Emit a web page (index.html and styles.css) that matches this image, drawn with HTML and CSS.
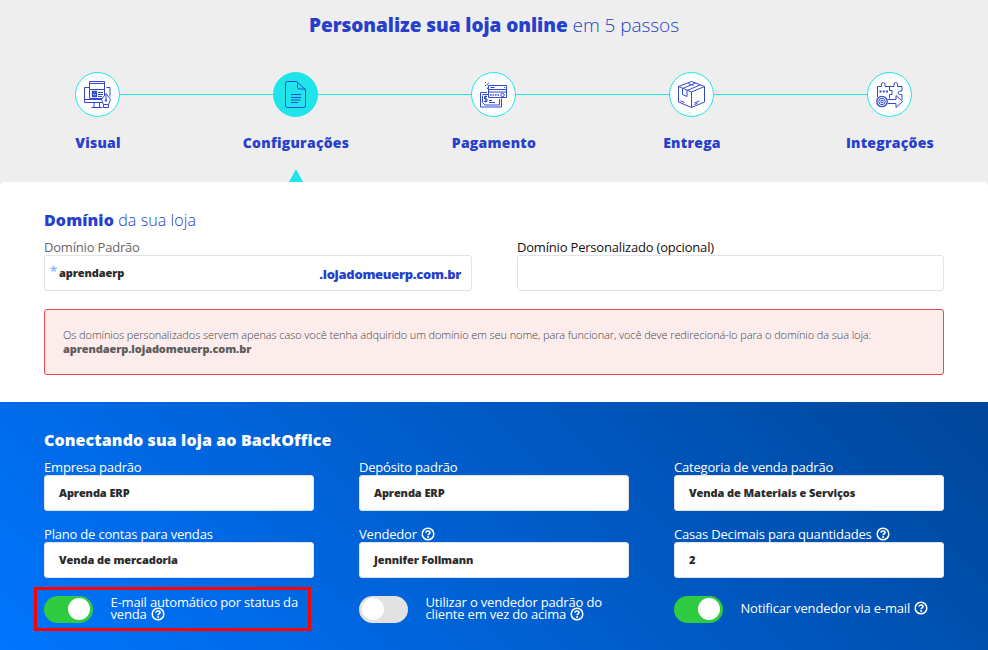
FILE: index.html
```html
<!DOCTYPE html>
<html lang="pt-BR">
<head>
<meta charset="utf-8">
<title>Personalize sua loja online</title>
<link rel="stylesheet" href="styles.css">
</head>
<body>
<svg class="defs" width="0" height="0">
  <symbol id="help" viewBox="0 0 14 14">
    <circle cx="7" cy="7" r="5.800" fill="none" stroke="currentColor" stroke-width="1.500"/>
    <path d="M4.900 5.700C5.100 4.500 5.900 4 7 4c1.200 0 2 .7 2 1.600C9 6.900 7.100 6.900 7.100 8.300" fill="none" stroke="currentColor" stroke-width="1.700"/>
    <circle cx="7.100" cy="10" r="1" fill="currentColor"/>
  </symbol>
</svg>
<header class="top">
  <h1 class="title"><b>Personalize sua loja online</b> <span>em 5 passos</span></h1>
  <ol class="steps">
    <li class="step">
      <span class="circle">
        <svg class="icon" viewBox="0 0 27 27">
          <path d="M5 6.500H.5v15h18M22.500 6.500H26v9M.5 18.500h17M10 21.500v4.500M15.500 21.500v4.500M7.500 26.500h11M5.500 .5h15v17h-15zM5.500 2.500h15M5.500 8.500h15M14 11.500h5M14 13.500h5M14 15.500h4"/>
          <path d="M8.500 10.500h4v5h-4zM8.500 10.500l4 5M12.500 10.500l-4 5" stroke-width="1.300"/>
          <path d="M22 12.500l4.500 6-2 5h-5l-2-5zM22 14v5M19.500 23.500h5v3h-5z" fill="#fff"/>
          <circle cx="22" cy="19.500" r=".9"/>
        </svg>
      </span>
      <span class="name">Visual</span>
    </li>
    <li class="step active">
      <span class="circle">
        <svg class="icon" viewBox="0 0 27 27">
          <path d="M14.500 .5H5.500a2 2 0 0 0-2 2v22a2 2 0 0 0 2 2h16a2 2 0 0 0 2-2V8.500zM15.500 .5V6a2 2 0 0 0 2 2h6"/>
          <path d="M9 13.500h10M9 16.500h10M9 19h9.500M9 21.500h7"/>
        </svg>
      </span>
      <span class="name">Configurações</span>
    </li>
    <li class="step">
      <span class="circle">
        <svg class="icon" viewBox="0 0 27 27">
          <path d="M8.500 4.500h18v12h-18zM8.500 8.500h18M8.500 11h18M10.500 6.500h4M24 6.500h1"/>
          <path d="M10 14h9" stroke-width="1.500" stroke-dasharray="1.500 1"/>
          <circle cx="22.500" cy="14" r="1.700"/>
          <path d="M7 11.500H.5v14.500h21v-8.500M2.500 14.500v7l2.500 2.500h14.500v-6M2.500 13.500H8M9 21.500h6M9 19.500h3M7 15.500H4.500v2.500h2.500v2.500h-3M5.700 14.500v7M6.500 4.500l2.500-3M5 1.500h1M5 4.500h1M7.500 8V6.500"/>
        </svg>
      </span>
      <span class="name">Pagamento</span>
    </li>
    <li class="step">
      <span class="circle">
        <svg class="icon" viewBox="0 0 27 27">
          <path d="M13.500 .5l13 5v15.500l-13 5.500-13-5.500V5.500zM.5 5.500l13 5.500 13-5.500M13.500 11v15.500M4.500 7.500l13-5.500M9 9.500L22 4M4.500 7.500v6l4.500 2v-6M2.500 20l4 1.500M16.500 22l5-2M16.500 23.500l3-1.200M10.500 2.500l5 2"/>
        </svg>
      </span>
      <span class="name">Entrega</span>
    </li>
    <li class="step">
      <span class="circle">
        <svg class="icon" viewBox="0 0 27 27">
          <path d="M1.500 16V5.500h4v-2.500a1.800 1.800 0 0 1 3.500 0v2.500h4.500v4h2.500v4h-2.500v4M13.500 5.500h4.500v-2.500a1.800 1.800 0 0 1 3.500 0v2.500h4.500v4.500h-2.500a1.800 1.800 0 0 0 0 3.500h2.500V19"/>
          <path d="M3.500 10.500h9" stroke-width="2" stroke-dasharray="2 1.200"/>
          <path d="M11.500 18.500h8.500v-4l6.500 6-6.500 6v-4h-8.500" fill="#fff"/>
          <circle cx="6" cy="20.500" r="5.200" fill="#fff" stroke-width="1.300"/>
          <circle cx="6" cy="20.500" r="3.200"/><circle cx="6" cy="20.500" r="1.300"/>
        </svg>
      </span>
      <span class="name">Integrações</span>
    </li>
  </ol>
</header>
<main>
  <section class="domain">
    <h2 class="heading"><b>Domínio</b> <span>da sua loja</span></h2>
    <div class="row two">
      <div class="field">
        <label class="label muted">Domínio Padrão</label>
        <div class="input"><span class="req">*</span><span class="value">aprendaerp</span><b class="suffix">.lojadomeuerp.com.br</b></div>
      </div>
      <div class="field">
        <label class="label dark">Domínio Personalizado (opcional)</label>
        <div class="input"></div>
      </div>
    </div>
    <div class="alert">
      <p class="notice">Os domínios personalizados servem apenas caso você tenha adquirido um domínio em seu nome, para funcionar, você deve redirecioná-lo para o domínio da sua loja:</p>
      <p class="address">aprendaerp.lojadomeuerp.com.br</p>
    </div>
  </section>
  <section class="office">
    <h2 class="heading"><b>Conectando sua loja ao BackOffice</b></h2>
    <div class="row three">
      <div class="field"><label class="label">Empresa padrão</label><div class="input"><span class="value">Aprenda ERP</span></div></div>
      <div class="field"><label class="label">Depósito padrão</label><div class="input"><span class="value">Aprenda ERP</span></div></div>
      <div class="field"><label class="label">Categoria de venda padrão</label><div class="input"><span class="value">Venda de Materiais e Serviços</span></div></div>
      <div class="field"><label class="label">Plano de contas para vendas</label><div class="input"><span class="value">Venda de mercadoria</span></div></div>
      <div class="field"><label class="label">Vendedor <svg class="help"><use href="#help"/></svg></label><div class="input"><span class="value">Jennifer Follmann</span></div></div>
      <div class="field"><label class="label">Casas Decimais para quantidades <svg class="help"><use href="#help"/></svg></label><div class="input"><span class="value">2</span></div></div>
      <div class="option marked"><span class="toggle on"></span><span class="caption">E-mail automático por status da<br>venda <svg class="help"><use href="#help"/></svg></span></div>
      <div class="option"><span class="toggle"></span><span class="caption">Utilizar o vendedor padrão do<br>cliente em vez do acima <svg class="help"><use href="#help"/></svg></span></div>
      <div class="option"><span class="toggle on"></span><span class="caption">Notificar vendedor via e-mail <svg class="help"><use href="#help"/></svg></span></div>
    </div>
  </section>
</main>
</body>
</html>
```
FILE: styles.css
```css
*, *::before, *::after { box-sizing: border-box; margin: 0; padding: 0; }
body {
  width: 988px;
  height: 650px;
  overflow: hidden;
  background: #eee;
  font-family: "Open Sans", "Noto Sans", sans-serif;
  font-size: 13px;
  color: #2640cb;
}
.defs { display: block; }
.top { height: 182px; padding-top: 11px; overflow: hidden; }
.title {
  height: 28px;
  line-height: 28px;
  font-size: 19px;
  font-weight: 300;
  letter-spacing: -.05px;
  text-align: center;
}
.title b { font-weight: 800; }
.steps {
  display: flex;
  margin: 33px -1px 0;
  list-style: none;
}
.step {
  position: relative;
  flex: 0 0 198px;
  height: 110px;
  display: flex;
  flex-direction: column;
  align-items: center;
}
.step + .step::before {
  content: "";
  position: absolute;
  top: 22px;
  left: -77px;
  width: 154px;
  height: 1px;
  background: #1fe5ea;
}
.circle {
  display: flex;
  align-items: center;
  justify-content: center;
  width: 45px;
  height: 45px;
  margin-right: 1px;
  border: 1px solid #1fe5ea;
  border-radius: 50%;
  background: #fff;
}
.active .circle { background: #1fe5ea; }
.icon {
  width: 27px;
  height: 27px;
  fill: none;
  stroke: #3049d0;
  stroke-width: 1;
}
.name {
  margin-top: 16px;
  line-height: 20px;
  font-size: 14px;
  font-weight: 800;
  letter-spacing: .25px;
}
.active::after {
  content: "";
  margin-top: 16px;
  border: 7px solid transparent;
  border-top: 0;
  border-bottom: 13px solid #1fe5ea;
}
.domain {
  height: 220px;
  padding: 26px 44px 0;
  background: #fff;
  border-radius: 5px 5px 0 0;
}
.heading {
  height: 24px;
  line-height: 24px;
  font-size: 16px;
  font-weight: 300;
  letter-spacing: .1px;
}
.heading b { font-weight: 800; }
.row { display: grid; }
.two { grid-template-columns: 428px 427px; column-gap: 45px; padding-top: 5px; }
.three { grid-template-columns: repeat(3, 270px); column-gap: 45px; row-gap: 13px; padding-top: 5px; }
.label {
  display: block;
  height: 18px;
  line-height: 20px;
  font-size: 13px;
  letter-spacing: -.19px;
  white-space: nowrap;
}
.muted { color: #666; }
.dark { color: #111; }
.input {
  display: flex;
  align-items: center;
  height: 36px;
  padding: 0 10px 0 14px;
  border: 1px solid #e1e3e6;
  border-radius: 3px;
  background: #fff;
}
.req { width: 9px; margin: -5px 0 0 -9px; color: #8bb5f5; font-size: 13px; font-weight: 700; }
.value { margin-bottom: 2px; font-size: 11px; font-weight: 800; letter-spacing: -.1px; color: #2b2b2b; }
.suffix { margin: 2px 0 0 auto; font-size: 13px; font-weight: 800; letter-spacing: -.3px; }
.alert {
  height: 66px;
  margin-top: 18px;
  padding: 18px;
  border: 1px solid #e8494f;
  border-radius: 3px;
  background: #fdecec;
  color: #5c5c5c;
  font-size: 11px;
  line-height: 14px;
  letter-spacing: -.1px;
}
.notice { white-space: nowrap; font-weight: 300; color: #444; }
.address { font-weight: 800; }
.office {
  height: 248px;
  padding: 26px 44px 0;
  background: linear-gradient(45deg, #0075ff, #00469a);
  color: #fff;
}
.help { width: 14px; height: 14px; margin-left: 1px; vertical-align: -2px; }
.option {
  position: relative;
  display: flex;
  align-items: center;
  height: 37px;
}
.toggle {
  flex: none;
  width: 49px;
  height: 27px;
  margin-right: 17.5px;
  padding: 2px 3px;
  border-radius: 14px;
  background: #e2e2e2;
}
.toggle::before {
  content: "";
  display: block;
  width: 22px;
  height: 22px;
  border-radius: 50%;
  background: #fff;
}
.on { background: #2ecc40; }
.on::before { margin-left: 21px; }
.caption {
  margin-bottom: 3px;
  line-height: 12px;
  font-size: 13px;
  letter-spacing: -.17px;
  white-space: nowrap;
}
.caption .help { margin: -3px 0 -1px 1px; vertical-align: -1px; }
.marked::after {
  content: "";
  position: absolute;
  top: -4px;
  left: -10px;
  width: 277px;
  height: 44px;
  border: 3px solid #f00;
}
```
